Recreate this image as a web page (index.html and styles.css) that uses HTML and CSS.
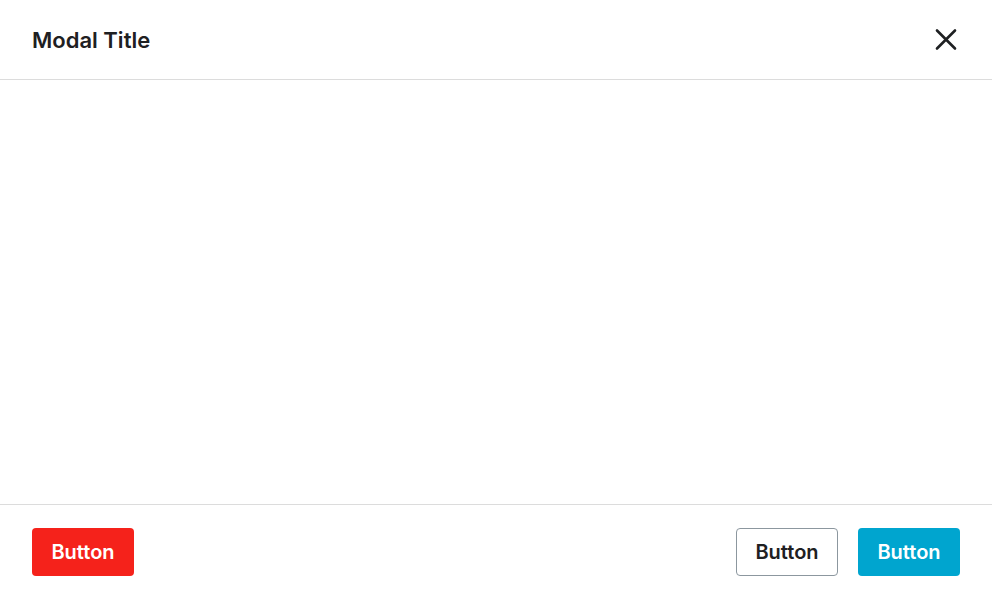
FILE: index.html
```html
<!DOCTYPE html>
<html lang="en">
<head>
    <meta charset="UTF-8">
    <meta name="viewport" content="width=device-width, initial-scale=1.0">
    <title>Modal</title>
    <link rel="stylesheet" href="styles.css">
</head>
<body>
    <div class="modal">
        <header class="modal-header">
            <h2 class="modal-title">Modal Title</h2>
            <button class="close-btn" aria-label="Close">
                <svg width="24" height="24" viewBox="0 0 24 24" fill="none" stroke="currentColor" stroke-width="2.6" stroke-linecap="round">
                    <path d="M3 2.5L21 20.5M21 2.5L3 20.5"/>
                </svg>
            </button>
        </header>

        <div class="modal-body"></div>

        <footer class="modal-footer">
            <button class="btn btn-danger">Button</button>
            <div class="footer-actions">
                <button class="btn btn-outline">Button</button>
                <button class="btn btn-primary">Button</button>
            </div>
        </footer>
    </div>
</body>
</html>
```

FILE: styles.css
```css
:root {
    --text: #1e2022;
    --divider: #dcdcdc;
    --danger: #f5221b;
    --primary: #00a5cf;
    --outline: #8c979f;
}

* {
    margin: 0;
    padding: 0;
    box-sizing: border-box;
    font-family: 'Inter', sans-serif;
}

body {
    background: white;
    color: var(--text);
}

.modal {
    height: 600px;
    display: flex;
    flex-direction: column;
}

/* Header */
.modal-header {
    height: 80px;
    display: flex;
    justify-content: space-between;
    align-items: center;
    padding: 0 32px;
    border-bottom: 1px solid var(--divider);
}

.modal-title {
    font-size: 22px;
    font-weight: 600;
}

.close-btn {
    background: none;
    border: none;
    color: var(--text);
    width: 24px;
    height: 24px;
    display: flex;
    cursor: pointer;
    margin-right: 2px;
}

.modal-body {
    flex: 1;
}

/* Footer */
.modal-footer {
    height: 96px;
    display: flex;
    justify-content: space-between;
    align-items: flex-start;
    padding: 23px 32px 0;
    border-top: 1px solid var(--divider);
}

.footer-actions {
    display: flex;
    gap: 20px;
}

.btn {
    height: 48px;
    width: 102px;
    border-radius: 4px;
    font-size: 20px;
    font-weight: 600;
    border: 1px solid transparent;
    cursor: pointer;
}

.btn-danger {
    background: var(--danger);
    color: white;
}

.btn-outline {
    background: white;
    border-color: var(--outline);
    color: var(--text);
}

.btn-primary {
    background: var(--primary);
    color: white;
}
```
